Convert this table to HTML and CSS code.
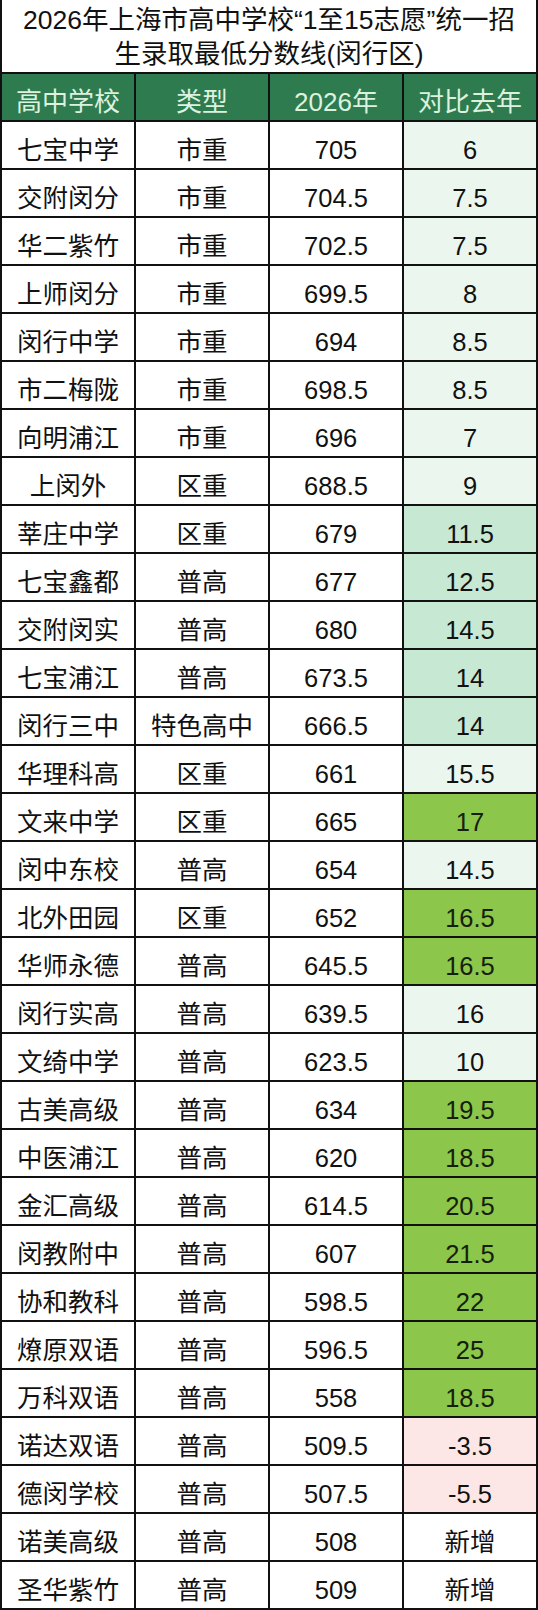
FILE: index.html
```html
<!DOCTYPE html>
<html lang="zh-CN">
<head>
<meta charset="utf-8">
<title>2026年上海市高中学校“1至15志愿”统一招生录取最低分数线(闵行区)</title>
<link rel="stylesheet" href="styles.css">
</head>
<body>
<div class="sheet">
  <div class="title">2026年上海市高中学校“1至15志愿”统一招<br>生录取最低分数线(闵行区)</div>
  <table class="score-table">
    <thead>
      <tr class="head"><th>高中学校</th><th>类型</th><th>2026年</th><th>对比去年</th></tr>
    </thead>
    <tbody>
      <tr><td>七宝中学</td><td>市重</td><td>705</td><td class="light">6</td></tr>
      <tr><td>交附闵分</td><td>市重</td><td>704.5</td><td class="light">7.5</td></tr>
      <tr><td>华二紫竹</td><td>市重</td><td>702.5</td><td class="light">7.5</td></tr>
      <tr><td>上师闵分</td><td>市重</td><td>699.5</td><td class="light">8</td></tr>
      <tr><td>闵行中学</td><td>市重</td><td>694</td><td class="light">8.5</td></tr>
      <tr><td>市二梅陇</td><td>市重</td><td>698.5</td><td class="light">8.5</td></tr>
      <tr><td>向明浦江</td><td>市重</td><td>696</td><td class="light">7</td></tr>
      <tr><td>上闵外</td><td>区重</td><td>688.5</td><td class="light">9</td></tr>
      <tr><td>莘庄中学</td><td>区重</td><td>679</td><td class="mid">11.5</td></tr>
      <tr><td>七宝鑫都</td><td>普高</td><td>677</td><td class="mid">12.5</td></tr>
      <tr><td>交附闵实</td><td>普高</td><td>680</td><td class="mid">14.5</td></tr>
      <tr><td>七宝浦江</td><td>普高</td><td>673.5</td><td class="mid">14</td></tr>
      <tr><td>闵行三中</td><td>特色高中</td><td>666.5</td><td class="mid">14</td></tr>
      <tr><td>华理科高</td><td>区重</td><td>661</td><td class="light">15.5</td></tr>
      <tr><td>文来中学</td><td>区重</td><td>665</td><td class="green">17</td></tr>
      <tr><td>闵中东校</td><td>普高</td><td>654</td><td class="light">14.5</td></tr>
      <tr><td>北外田园</td><td>区重</td><td>652</td><td class="green">16.5</td></tr>
      <tr><td>华师永德</td><td>普高</td><td>645.5</td><td class="green">16.5</td></tr>
      <tr><td>闵行实高</td><td>普高</td><td>639.5</td><td class="light">16</td></tr>
      <tr><td>文绮中学</td><td>普高</td><td>623.5</td><td class="light">10</td></tr>
      <tr><td>古美高级</td><td>普高</td><td>634</td><td class="green">19.5</td></tr>
      <tr><td>中医浦江</td><td>普高</td><td>620</td><td class="green">18.5</td></tr>
      <tr><td>金汇高级</td><td>普高</td><td>614.5</td><td class="green">20.5</td></tr>
      <tr><td>闵教附中</td><td>普高</td><td>607</td><td class="green">21.5</td></tr>
      <tr><td>协和教科</td><td>普高</td><td>598.5</td><td class="green">22</td></tr>
      <tr><td>燎原双语</td><td>普高</td><td>596.5</td><td class="green">25</td></tr>
      <tr><td>万科双语</td><td>普高</td><td>558</td><td class="green">18.5</td></tr>
      <tr><td>诺达双语</td><td>普高</td><td>509.5</td><td class="pink">-3.5</td></tr>
      <tr><td>德闵学校</td><td>普高</td><td>507.5</td><td class="pink">-5.5</td></tr>
      <tr><td>诺美高级</td><td>普高</td><td>508</td><td>新增</td></tr>
      <tr><td>圣华紫竹</td><td>普高</td><td>509</td><td>新增</td></tr>
    </tbody>
  </table>
</div>
</body>
</html>
```

FILE: styles.css
```css
html, body {
  margin: 0;
  padding: 0;
  background: #ffffff;
}

body {
  font-family: "Liberation Sans", "Noto Sans CJK SC", sans-serif;
  color: #111111;
}

.sheet {
  width: 538px;
}

.title {
  box-sizing: border-box;
  height: 72px;
  padding-top: 3px;
  border-left: 2px solid #111;
  border-right: 2px solid #111;
  font-size: 26.5px;
  line-height: 34px;
  text-align: center;
  color: #111;
  white-space: nowrap;
}

.score-table {
  width: 538px;
  table-layout: fixed;
  border-collapse: separate;
  border-spacing: 0;
  border-left: 2px solid #111;
  border-top: 2px solid #111;
}

.score-table tr {
  height: 48px;
}

.score-table th,
.score-table td {
  box-sizing: border-box;
  padding: 9px 0 0 0;
  border-right: 2px solid #111;
  border-bottom: 2px solid #111;
  text-align: center;
  vertical-align: middle;
  font-size: 25.5px;
  line-height: 30px;
  font-weight: normal;
  white-space: nowrap;
  overflow: hidden;
}

.head th {
  background: #2f7b50;
  color: #dcf2df;
  font-size: 26px;
}

.score-table td.light {
  background: #ebf7ee;
}

.score-table td.mid {
  background: #c7e9d4;
}

.score-table td.green {
  background: #8cc64a;
  color: #15200c;
}

.score-table td.pink {
  background: #fde7e6;
}
```
